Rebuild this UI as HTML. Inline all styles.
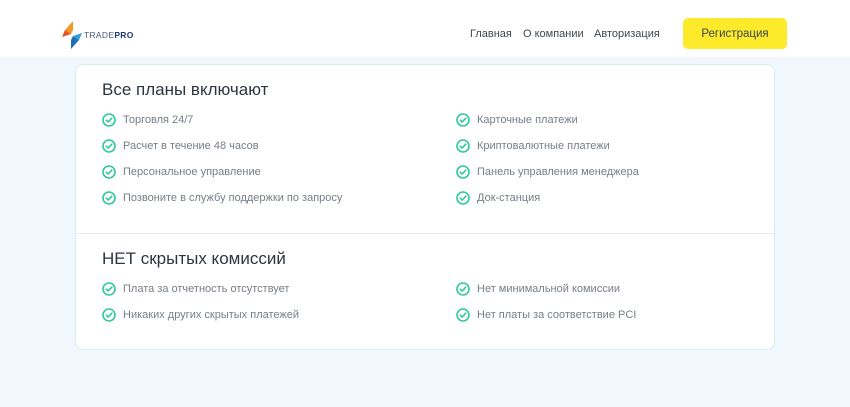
<!DOCTYPE html>
<html><head><meta charset="utf-8"><style>
*{margin:0;padding:0;box-sizing:border-box}
body{width:850px;height:407px;background:#f0f7fd;font-family:"Liberation Sans",sans-serif;position:relative;overflow:hidden}
.hdr{position:absolute;left:0;top:0;width:850px;height:57px;background:#fff}
.nav{position:absolute;top:28px;font-size:11px;color:#3d4650}
.btn{position:absolute;left:683px;top:18px;width:104px;height:31px;background:#fcea2b;border-radius:5px;font-size:11.5px;color:#3d4650;text-align:center;line-height:33px}
.card{position:absolute;left:75px;top:64px;width:700px;height:286px;background:#fff;border:1px solid #d5eef2;border-radius:8px}
.div{position:absolute;left:0;top:168px;width:698px;height:1px;background:#e3edf0}
h2{position:absolute;font-weight:normal;font-size:17px;color:#2c3540;left:26px}
.it{position:absolute;font-size:11px;color:#757e86;display:flex;align-items:center;height:14px;line-height:16px}
.it svg{margin-right:7px;flex:none}
.logo{position:absolute;left:62px;top:21px}
</style></head><body>
<div class="hdr">
<svg class="logo" width="20" height="28" viewBox="0 0 20 28"><path d="M11 0 L3 9 L9 13 L11 9 Z" fill="#f39a26"/><path d="M3 9 L9 13 L0 16 Z" fill="#e2532a"/><path d="M9 28 L17 19 L11 15 L9 19 Z" fill="#1f6fb2"/><path d="M17 19 L11 15 L20 12 Z" fill="#2d9fd8"/></svg>
<div style="position:absolute;left:84px;top:30px;font-size:8.5px;font-weight:bold;color:#1d3c6b;letter-spacing:.3px"><span style="font-weight:normal;color:#4a5a70">TRADE</span>PRO</div>
<div class="nav" style="left:470px">Главная</div>
<div class="nav" style="left:523px">О компании</div>
<div class="nav" style="left:594px">Авторизация</div>
<div class="btn">Регистрация</div>
</div>
<div class="card">
<h2 style="top:15px">Все планы включают</h2>
<div class="div"></div>
<h2 style="top:184px">НЕТ скрытых комиссий</h2>
</div>

<div class="it" style="left:102px;top:113px"><svg width="14" height="14" viewBox="0 0 14 14"><circle cx="7" cy="7" r="6" fill="none" stroke="#2ec99a" stroke-width="1.6"/><path d="M4.3 7.2 L6.2 9 L9.8 5.2" fill="none" stroke="#2ec99a" stroke-width="1.6" stroke-linecap="round" stroke-linejoin="round"/></svg>Торговля 24/7</div>
<div class="it" style="left:102px;top:139px"><svg width="14" height="14" viewBox="0 0 14 14"><circle cx="7" cy="7" r="6" fill="none" stroke="#2ec99a" stroke-width="1.6"/><path d="M4.3 7.2 L6.2 9 L9.8 5.2" fill="none" stroke="#2ec99a" stroke-width="1.6" stroke-linecap="round" stroke-linejoin="round"/></svg>Расчет в течение 48 часов</div>
<div class="it" style="left:102px;top:165px"><svg width="14" height="14" viewBox="0 0 14 14"><circle cx="7" cy="7" r="6" fill="none" stroke="#2ec99a" stroke-width="1.6"/><path d="M4.3 7.2 L6.2 9 L9.8 5.2" fill="none" stroke="#2ec99a" stroke-width="1.6" stroke-linecap="round" stroke-linejoin="round"/></svg>Персональное управление</div>
<div class="it" style="left:102px;top:191px"><svg width="14" height="14" viewBox="0 0 14 14"><circle cx="7" cy="7" r="6" fill="none" stroke="#2ec99a" stroke-width="1.6"/><path d="M4.3 7.2 L6.2 9 L9.8 5.2" fill="none" stroke="#2ec99a" stroke-width="1.6" stroke-linecap="round" stroke-linejoin="round"/></svg>Позвоните в службу поддержки по запросу</div>

<div class="it" style="left:456px;top:113px"><svg width="14" height="14" viewBox="0 0 14 14"><circle cx="7" cy="7" r="6" fill="none" stroke="#2ec99a" stroke-width="1.6"/><path d="M4.3 7.2 L6.2 9 L9.8 5.2" fill="none" stroke="#2ec99a" stroke-width="1.6" stroke-linecap="round" stroke-linejoin="round"/></svg>Карточные платежи</div>
<div class="it" style="left:456px;top:139px"><svg width="14" height="14" viewBox="0 0 14 14"><circle cx="7" cy="7" r="6" fill="none" stroke="#2ec99a" stroke-width="1.6"/><path d="M4.3 7.2 L6.2 9 L9.8 5.2" fill="none" stroke="#2ec99a" stroke-width="1.6" stroke-linecap="round" stroke-linejoin="round"/></svg>Криптовалютные платежи</div>
<div class="it" style="left:456px;top:165px"><svg width="14" height="14" viewBox="0 0 14 14"><circle cx="7" cy="7" r="6" fill="none" stroke="#2ec99a" stroke-width="1.6"/><path d="M4.3 7.2 L6.2 9 L9.8 5.2" fill="none" stroke="#2ec99a" stroke-width="1.6" stroke-linecap="round" stroke-linejoin="round"/></svg>Панель управления менеджера</div>
<div class="it" style="left:456px;top:191px"><svg width="14" height="14" viewBox="0 0 14 14"><circle cx="7" cy="7" r="6" fill="none" stroke="#2ec99a" stroke-width="1.6"/><path d="M4.3 7.2 L6.2 9 L9.8 5.2" fill="none" stroke="#2ec99a" stroke-width="1.6" stroke-linecap="round" stroke-linejoin="round"/></svg>Док-станция</div>

<div class="it" style="left:102px;top:282px"><svg width="14" height="14" viewBox="0 0 14 14"><circle cx="7" cy="7" r="6" fill="none" stroke="#2ec99a" stroke-width="1.6"/><path d="M4.3 7.2 L6.2 9 L9.8 5.2" fill="none" stroke="#2ec99a" stroke-width="1.6" stroke-linecap="round" stroke-linejoin="round"/></svg>Плата за отчетность отсутствует</div>
<div class="it" style="left:102px;top:308px"><svg width="14" height="14" viewBox="0 0 14 14"><circle cx="7" cy="7" r="6" fill="none" stroke="#2ec99a" stroke-width="1.6"/><path d="M4.3 7.2 L6.2 9 L9.8 5.2" fill="none" stroke="#2ec99a" stroke-width="1.6" stroke-linecap="round" stroke-linejoin="round"/></svg>Никаких других скрытых платежей</div>
<div class="it" style="left:456px;top:282px"><svg width="14" height="14" viewBox="0 0 14 14"><circle cx="7" cy="7" r="6" fill="none" stroke="#2ec99a" stroke-width="1.6"/><path d="M4.3 7.2 L6.2 9 L9.8 5.2" fill="none" stroke="#2ec99a" stroke-width="1.6" stroke-linecap="round" stroke-linejoin="round"/></svg>Нет минимальной комиссии</div>
<div class="it" style="left:456px;top:308px"><svg width="14" height="14" viewBox="0 0 14 14"><circle cx="7" cy="7" r="6" fill="none" stroke="#2ec99a" stroke-width="1.6"/><path d="M4.3 7.2 L6.2 9 L9.8 5.2" fill="none" stroke="#2ec99a" stroke-width="1.6" stroke-linecap="round" stroke-linejoin="round"/></svg>Нет платы за соответствие PCI</div>
</body></html>
